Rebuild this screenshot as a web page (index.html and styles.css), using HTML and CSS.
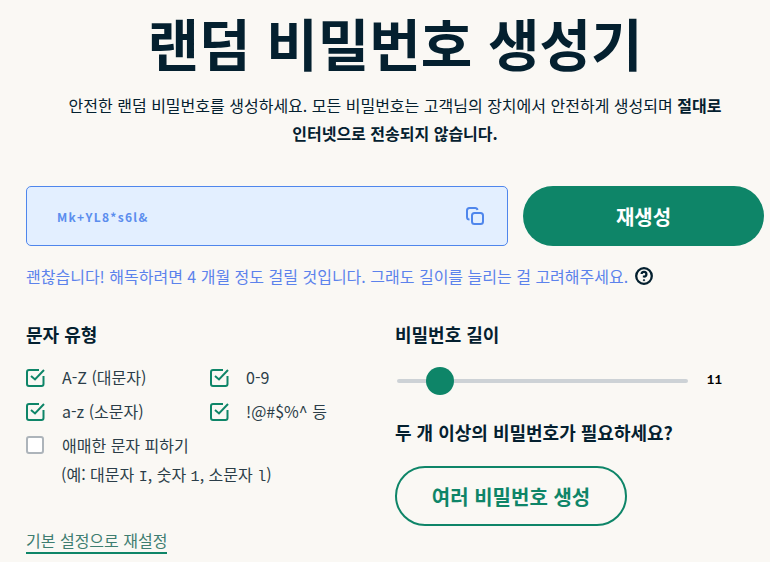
FILE: index.html
```html
<!DOCTYPE html>
<html lang="ko">
<head>
    <meta charset="UTF-8">
    <title>랜덤 비밀번호 생성기</title>
    <link rel="stylesheet" href="styles.css">
</head>
<body>
<main class="page">
    <h1>랜덤 비밀번호 생성기</h1>
    <p class="intro">안전한 랜덤 비밀번호를 생성하세요. 모든 비밀번호는 고객님의 장치에서 안전하게 생성되며 <b>절대로<br>인터넷으로 전송되지 않습니다.</b></p>

    <div class="output-row">
        <div class="output">
            <span class="password">Mk+YL8*s6l&amp;</span>
            <svg class="copy" width="20" height="20" viewBox="0 0 20 20" fill="none" stroke="#4f86ec" stroke-width="2">
                <rect x="7" y="7" width="11" height="11" rx="2.5"/>
                <path d="M4.5 13.5 A2.5 2.5 0 0 1 2 11 V4.5 A2.5 2.5 0 0 1 4.5 2 H10 A2.5 2.5 0 0 1 12.5 4"/>
            </svg>
        </div>
        <button class="regen">재생성</button>
    </div>

    <p class="strength">괜찮습니다! 해독하려면 4 개월 정도 걸릴 것입니다. 그래도 길이를 늘리는 걸 고려해주세요.
        <svg class="help" width="20" height="20" viewBox="0 0 20 20" fill="none" stroke="#04202f" stroke-width="2.3">
            <circle cx="10" cy="10" r="7.8"/>
            <path d="M7.6 8 A2.4 2.4 0 1 1 10 10.6 V11.4"/>
            <circle cx="10" cy="14.2" r="0.7" fill="#04202f" stroke-width="0.8"/>
        </svg>
    </p>

    <div class="options">
        <section class="types">
            <h2>문자 유형</h2>
            <div class="type-grid">
                <label class="check"><svg class="tick" width="20" height="22" viewBox="0 0 20 22" fill="none" stroke="#0e8568" stroke-width="2"><path d="M13 4 H3 a2 2 0 0 0 -2 2 V18 a2 2 0 0 0 2 2 H15.5 a2 2 0 0 0 2 -2 V10"/><path d="M5 10 L9 13.4 L18 4"/></svg>A-Z (대문자)</label>
                <label class="check"><svg class="tick" width="20" height="22" viewBox="0 0 20 22" fill="none" stroke="#0e8568" stroke-width="2"><path d="M13 4 H3 a2 2 0 0 0 -2 2 V18 a2 2 0 0 0 2 2 H15.5 a2 2 0 0 0 2 -2 V10"/><path d="M5 10 L9 13.4 L18 4"/></svg>0-9</label>
                <label class="check"><svg class="tick" width="20" height="22" viewBox="0 0 20 22" fill="none" stroke="#0e8568" stroke-width="2"><path d="M13 4 H3 a2 2 0 0 0 -2 2 V18 a2 2 0 0 0 2 2 H15.5 a2 2 0 0 0 2 -2 V10"/><path d="M5 10 L9 13.4 L18 4"/></svg>a-z (소문자)</label>
                <label class="check"><svg class="tick" width="20" height="22" viewBox="0 0 20 22" fill="none" stroke="#0e8568" stroke-width="2"><path d="M13 4 H3 a2 2 0 0 0 -2 2 V18 a2 2 0 0 0 2 2 H15.5 a2 2 0 0 0 2 -2 V10"/><path d="M5 10 L9 13.4 L18 4"/></svg>!@#$%^ 등</label>
            </div>
            <label class="check wide"><span class="box"></span>애매한 문자 피하기</label>
            <p class="hint">(예: 대문자 <code>I</code>, 숫자 <code>1</code>, 소문자 <code>l</code>)</p>
            <a class="reset" href="#">기본 설정으로 재설정</a>
        </section>
        <section class="length">
            <h2>비밀번호 길이</h2>
            <div class="slider-row">
                <div class="slider"><span class="thumb"></span></div>
                <span class="value">11</span>
            </div>
            <h2 class="more">두 개 이상의 비밀번호가 필요하세요?</h2>
            <button class="multi">여러 비밀번호 생성</button>
        </section>
    </div>
</main>
</body>
</html>
```

FILE: styles.css
```css
html, body { margin: 0; height: 562px; overflow: hidden; }
body { background: #faf8f4; color: #04202f; font-family: "Noto Sans CJK KR", "Noto Sans", sans-serif; }
.page { padding: 0 6px 0 26px; }
h1 { margin: 0; font-size: 56px; line-height: 84px; font-weight: 700; text-align: center; }
.intro { margin: 7px 0 0; font-size: 16px; line-height: 28px; text-align: center; }
.intro b { font-weight: 700; }
.output-row { display: flex; gap: 15px; margin-top: 39px; }
.output { flex: 0 0 482px; box-sizing: border-box; height: 60px; display: flex; align-items: center; justify-content: space-between; padding: 0 22px 0 30px; background: #e3efff; border: 1px solid #4f86ec; border-radius: 5px; }
.password { font-size: 12px; font-weight: 700; letter-spacing: 1.3px; color: #5b8dee; }
.regen { flex: 1; height: 60px; border: none; border-radius: 30px; background: #0e8568; color: #fff; font: 700 20px "Noto Sans CJK KR", sans-serif; }
.strength { margin: 18px 0 0; display: flex; align-items: center; gap: 6px; font-size: 16px; line-height: 24px; color: #5c82ec; }
.options { display: flex; margin-top: 33px; }
.types { flex: 0 0 369px; }
.length { flex: 1; }
h2 { margin: 0; font-size: 18px; line-height: 26px; font-weight: 700; }
.type-grid { display: grid; grid-template-columns: 184px 1fr; row-gap: 12px; margin-top: 19px; }
.check { display: flex; align-items: center; font-size: 16px; line-height: 22px; color: #2b3d48; }
.wide { margin-top: 12px; }
.tick { flex: none; margin-right: 16px; }
.box { flex: none; box-sizing: border-box; width: 18px; height: 18px; margin-right: 18px; border: 2px solid #adb4ba; border-radius: 3px; background: #fff; }
.hint { margin: 7px 0 0 35px; font-size: 16px; line-height: 22px; color: #2b3d48; }
code { font-family: "Liberation Mono", monospace; font-size: 15px; }
.reset { display: inline-block; margin-top: 40px; font-size: 16px; line-height: 22px; color: #3e7d70; text-decoration: none; border-bottom: 2px solid #0e8568; padding-bottom: 1px; }
.slider-row { display: flex; align-items: center; margin-top: 27px; }
.slider { position: relative; width: 291px; height: 4px; margin-left: 2px; background: #cdd2d6; border-radius: 2px; }
.thumb { position: absolute; left: 29px; top: -12px; width: 28px; height: 28px; border-radius: 50%; background: #0e8568; }
.value { margin-left: 19px; font: 700 12px "Liberation Mono", monospace; letter-spacing: 0.5px; color: #000; }
.more { margin-top: 31px; }
.multi { margin-top: 21px; width: 232px; height: 60px; box-sizing: border-box; background: none; border: 2px solid #0e8568; border-radius: 30px; color: #0e8568; font: 700 20px "Noto Sans CJK KR", sans-serif; }
```
